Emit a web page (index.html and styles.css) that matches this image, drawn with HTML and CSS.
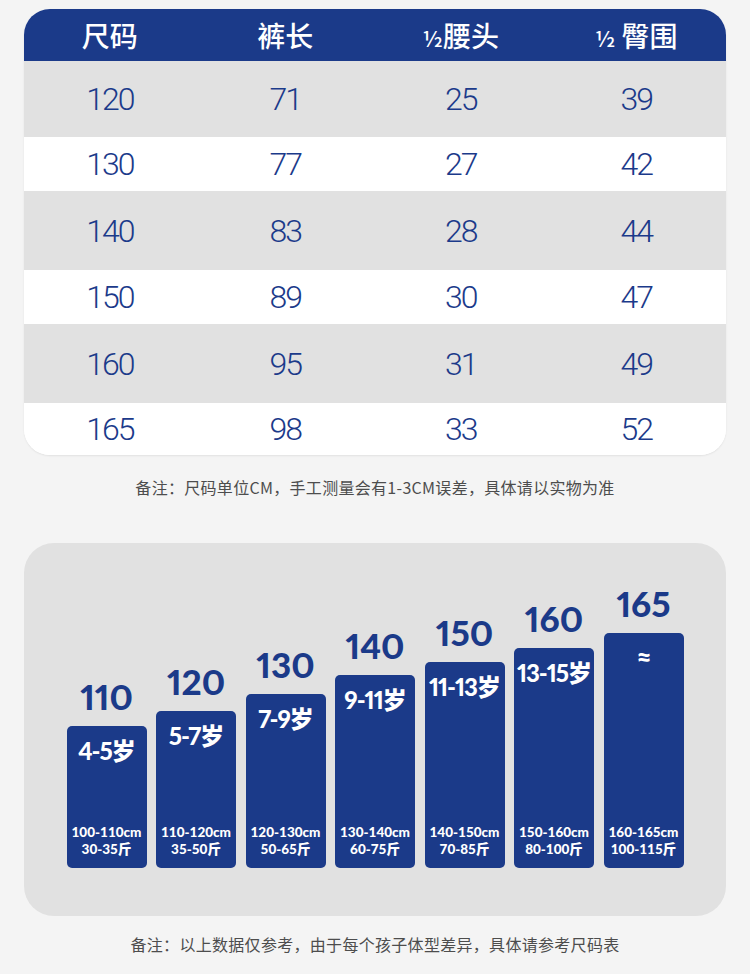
FILE: index.html
```html
<!DOCTYPE html>
<html lang="zh">
<head>
<meta charset="utf-8">
<link rel="stylesheet" href="styles.css">
</head>
<body>
<div class="page">
  <div class="table">
    <div class="row head">
      <div>尺码</div><div>裤长</div><div><span class="half">½</span>腰头</div><div><span class="half">½</span> 臀围</div>
    </div>
    <div class="row gray tall"><div>120</div><div>71</div><div>25</div><div>39</div></div>
    <div class="row white"><div>130</div><div>77</div><div>27</div><div>42</div></div>
    <div class="row gray tall2"><div>140</div><div>83</div><div>28</div><div>44</div></div>
    <div class="row white"><div>150</div><div>89</div><div>30</div><div>47</div></div>
    <div class="row gray tall2"><div>160</div><div>95</div><div>31</div><div>49</div></div>
    <div class="row white last"><div>165</div><div>98</div><div>33</div><div>52</div></div>
  </div>
  <p class="note note1">备注：尺码单位CM，手工测量会有1-3CM误差，具体请以实物为准</p>

  <div class="chart">
    <div class="col"><div class="label">110</div><div class="bar" style="height:142px"><div class="age">4-5岁</div><div class="info">100-110cm<br>30-35斤</div></div></div>
    <div class="col"><div class="label">120</div><div class="bar" style="height:157px"><div class="age">5-7岁</div><div class="info">110-120cm<br>35-50斤</div></div></div>
    <div class="col"><div class="label">130</div><div class="bar" style="height:174px"><div class="age">7-9岁</div><div class="info">120-130cm<br>50-65斤</div></div></div>
    <div class="col"><div class="label">140</div><div class="bar" style="height:193px"><div class="age">9-11岁</div><div class="info">130-140cm<br>60-75斤</div></div></div>
    <div class="col"><div class="label">150</div><div class="bar" style="height:206px"><div class="age">11-13岁</div><div class="info">140-150cm<br>70-85斤</div></div></div>
    <div class="col"><div class="label">160</div><div class="bar" style="height:220px"><div class="age">13-15岁</div><div class="info">150-160cm<br>80-100斤</div></div></div>
    <div class="col"><div class="label">165</div><div class="bar" style="height:235px"><div class="age approx">≈</div><div class="info">160-165cm<br>100-115斤</div></div></div>
  </div>
  <p class="note note2">备注：以上数据仅参考，由于每个孩子体型差异，具体请参考尺码表</p>
</div>
</body>
</html>
```

FILE: styles.css
```css
html, body {
  margin: 0;
  padding: 0;
  background: #f4f4f4;
}
.page {
  width: 750px;
  height: 974px;
  box-sizing: border-box;
  padding: 9px 24px 0;
  font-family: "Noto Sans CJK SC", "Noto Sans", sans-serif;
}
.table {
  background: #ffffff;
  border-radius: 26px;
  overflow: hidden;
  box-shadow: 0 1px 2px rgba(0, 0, 0, 0.08);
}
.row {
  display: grid;
  grid-template-columns: repeat(4, 1fr);
  align-items: center;
  text-align: center;
  color: #1b3a8a;
  font-family: Roboto, "Noto Sans", sans-serif;
  font-weight: 300;
  font-size: 32px;
  letter-spacing: -2px;
}
.row > div {
  padding-right: 4px;
}
.row.head {
  height: 52px;
  background: #1b3a89;
  color: #ffffff;
  font-family: "Noto Sans CJK SC", sans-serif;
  font-weight: 500;
  font-size: 28px;
  letter-spacing: 0;
}
.half {
  font-size: 22px;
  font-weight: 500;
  font-family: "Noto Sans CJK SC", sans-serif;
}
.row.gray { background: #e1e1e1; }
.row.white { background: #ffffff; height: 54px; }
.row.tall { height: 76px; }
.row.tall2 { height: 79px; }
.row.last { height: 52px; }

.note {
  margin: 0;
  text-align: center;
  color: #4d4d4d;
  font-size: 16px;
  line-height: 24px;
  letter-spacing: 0.3px;
}
.note1 { margin-top: 20px; margin-bottom: 44px; }
.note2 { margin-top: 16px; }

.chart {
  height: 373px;
  box-sizing: border-box;
  background: #e1e1e1;
  border-radius: 30px;
  display: flex;
  justify-content: center;
  align-items: flex-end;
  gap: 9.5px;
  padding-bottom: 48px;
}
.col {
  width: 80px;
  display: flex;
  flex-direction: column;
  align-items: center;
}
.label {
  font-family: Lato, "Noto Sans", sans-serif;
  font-weight: 900;
  font-size: 35px;
  line-height: 35px;
  color: #1b3a89;
  margin-bottom: 12px;
  font-variant-numeric: proportional-nums;
}
.bar {
  width: 80px;
  box-sizing: border-box;
  background: #1b3a89;
  border-radius: 5px;
  color: #ffffff;
  display: flex;
  flex-direction: column;
  justify-content: space-between;
  align-items: center;
  padding: 12px 0 10px;
}
.age {
  font-family: Lato, "Noto Sans CJK SC", sans-serif;
  font-weight: 900;
  font-size: 24px;
  line-height: 25px;
  letter-spacing: -1px;
  white-space: nowrap;
  font-variant-numeric: proportional-nums;
}
.approx {
  font-size: 26px;
}
.info {
  font-family: Lato, "Noto Sans CJK SC", sans-serif;
  font-weight: 900;
  font-size: 13.5px;
  line-height: 17px;
  text-align: center;
  white-space: nowrap;
}
```
